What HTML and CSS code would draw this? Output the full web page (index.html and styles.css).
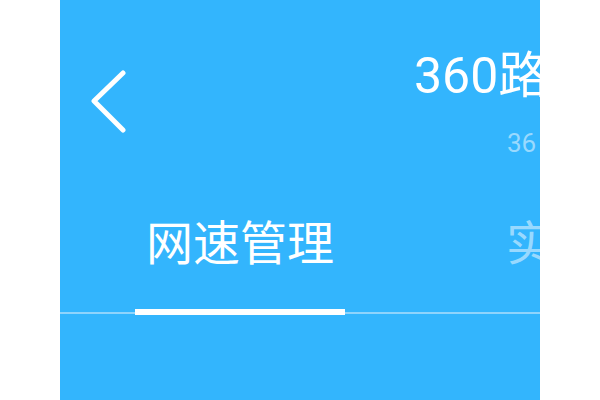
FILE: index.html
```html
<!DOCTYPE html>
<html lang="zh">
<head>
<meta charset="utf-8">
<link rel="stylesheet" href="styles.css">
</head>
<body>
<div class="panel">
  <div class="header">
    <div class="back">
      <svg width="40" height="64" viewBox="0 0 40 64"><polyline points="35,3 6,31 35,60" fill="none" stroke="#fff" stroke-width="5" stroke-linecap="round" stroke-linejoin="round"/></svg>
    </div>
    <div class="titles">
      <div class="title">360路由器卫士</div>
      <div class="subtitle">36 安全路由</div>
    </div>
  </div>
  <div class="tabbar">
    <div class="tab active">网速管理<span class="indicator"></span></div>
    <div class="tab">实时流量</div>
  </div>
</div>
</body>
</html>
```
FILE: styles.css
```css
html, body {
  margin: 0;
  padding: 0;
  background: #ffffff;
}
body {
  font-family: Roboto, "Noto Sans CJK SC", sans-serif;
}
.panel {
  margin-left: 60px;
  width: 480px;
  height: 400px;
  background: #33b5fd;
  overflow: hidden;
}
.header {
  display: flex;
  height: 200px;
}
.back {
  flex: none;
  width: 40px;
  margin-left: 28px;
  padding-top: 70px;
}
.back svg {
  display: block;
}
.titles {
  flex: none;
  margin-left: 286px;
  padding-top: 51px;
  white-space: nowrap;
}
.title {
  font-size: 50px;
  line-height: 50px;
  color: #ffffff;
}
.subtitle {
  margin-top: 29px;
  margin-left: 93px;
  font-size: 26px;
  line-height: 26px;
  color: #99d9fe;
}
.tabbar {
  display: flex;
  white-space: nowrap;
  border-bottom: 2px solid #8fd4fc;
  height: 114px;
  box-sizing: border-box;
}
.tab {
  position: relative;
  flex: none;
  font-family: "Noto Sans CJK SC", sans-serif;
  font-size: 47px;
  line-height: 47px;
  padding-top: 16px;
  color: #99d9fe;
}
.tab.active {
  width: 210px;
  margin-left: 75px;
  text-align: center;
  color: #ffffff;
}
.tab + .tab {
  margin-left: 161px;
}
.indicator {
  position: absolute;
  left: 0;
  right: 0;
  bottom: -3px;
  height: 6px;
  background: #ffffff;
}
```
